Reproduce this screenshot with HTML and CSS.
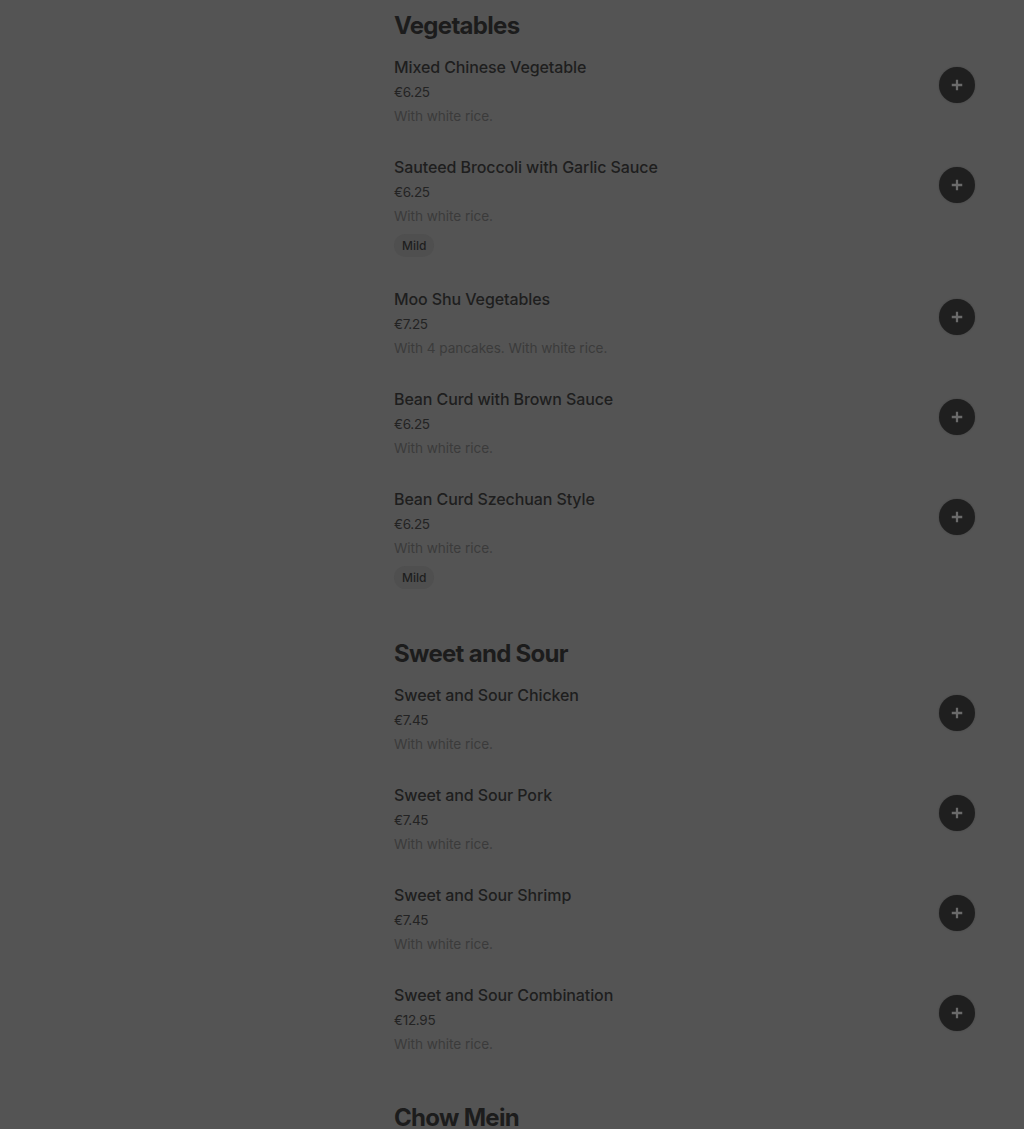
FILE: index.html
```html
<!DOCTYPE html>
<html lang="en">
<head>
<meta charset="utf-8">
<title>Menu</title>
<link rel="stylesheet" href="styles.css">
</head>
<body>
<div class="page">
  <aside class="side"></aside>
  <main class="menu">
    <section class="section">
      <h2 class="section-title">Vegetables</h2>
      <div class="item">
        <div class="info">
          <div class="name">Mixed Chinese Vegetable</div>
          <div class="price">€6.25</div>
          <div class="desc">With white rice.</div>
        </div>
        <button class="add" aria-label="Add"><svg viewBox="0 0 16 16" width="16" height="16"><path d="M8 2v12M2 8h12" stroke="currentColor" stroke-width="2.6" fill="none"/></svg></button>
      </div>
      <div class="item">
        <div class="info">
          <div class="name">Sauteed Broccoli with Garlic Sauce</div>
          <div class="price">€6.25</div>
          <div class="desc">With white rice.</div>
          <span class="tag">Mild</span>
        </div>
        <button class="add" aria-label="Add"><svg viewBox="0 0 16 16" width="16" height="16"><path d="M8 2v12M2 8h12" stroke="currentColor" stroke-width="2.6" fill="none"/></svg></button>
      </div>
      <div class="item">
        <div class="info">
          <div class="name">Moo Shu Vegetables</div>
          <div class="price">€7.25</div>
          <div class="desc">With 4 pancakes. With white rice.</div>
        </div>
        <button class="add" aria-label="Add"><svg viewBox="0 0 16 16" width="16" height="16"><path d="M8 2v12M2 8h12" stroke="currentColor" stroke-width="2.6" fill="none"/></svg></button>
      </div>
      <div class="item">
        <div class="info">
          <div class="name">Bean Curd with Brown Sauce</div>
          <div class="price">€6.25</div>
          <div class="desc">With white rice.</div>
        </div>
        <button class="add" aria-label="Add"><svg viewBox="0 0 16 16" width="16" height="16"><path d="M8 2v12M2 8h12" stroke="currentColor" stroke-width="2.6" fill="none"/></svg></button>
      </div>
      <div class="item">
        <div class="info">
          <div class="name">Bean Curd Szechuan Style</div>
          <div class="price">€6.25</div>
          <div class="desc">With white rice.</div>
          <span class="tag">Mild</span>
        </div>
        <button class="add" aria-label="Add"><svg viewBox="0 0 16 16" width="16" height="16"><path d="M8 2v12M2 8h12" stroke="currentColor" stroke-width="2.6" fill="none"/></svg></button>
      </div>
    </section>
    <section class="section">
      <h2 class="section-title">Sweet and Sour</h2>
      <div class="item">
        <div class="info">
          <div class="name">Sweet and Sour Chicken</div>
          <div class="price">€7.45</div>
          <div class="desc">With white rice.</div>
        </div>
        <button class="add" aria-label="Add"><svg viewBox="0 0 16 16" width="16" height="16"><path d="M8 2v12M2 8h12" stroke="currentColor" stroke-width="2.6" fill="none"/></svg></button>
      </div>
      <div class="item">
        <div class="info">
          <div class="name">Sweet and Sour Pork</div>
          <div class="price">€7.45</div>
          <div class="desc">With white rice.</div>
        </div>
        <button class="add" aria-label="Add"><svg viewBox="0 0 16 16" width="16" height="16"><path d="M8 2v12M2 8h12" stroke="currentColor" stroke-width="2.6" fill="none"/></svg></button>
      </div>
      <div class="item">
        <div class="info">
          <div class="name">Sweet and Sour Shrimp</div>
          <div class="price">€7.45</div>
          <div class="desc">With white rice.</div>
        </div>
        <button class="add" aria-label="Add"><svg viewBox="0 0 16 16" width="16" height="16"><path d="M8 2v12M2 8h12" stroke="currentColor" stroke-width="2.6" fill="none"/></svg></button>
      </div>
      <div class="item">
        <div class="info">
          <div class="name">Sweet and Sour Combination</div>
          <div class="price">€12.95</div>
          <div class="desc">With white rice.</div>
        </div>
        <button class="add" aria-label="Add"><svg viewBox="0 0 16 16" width="16" height="16"><path d="M8 2v12M2 8h12" stroke="currentColor" stroke-width="2.6" fill="none"/></svg></button>
      </div>
    </section>
    <section class="section">
      <h2 class="section-title">Chow Mein</h2>
    </section>
  </main>
</div>
</body>
</html>
```
FILE: styles.css
```css
html, body {
  margin: 0;
  padding: 0;
  background: #545454;
  height: 1129px;
  overflow: hidden;
}
body {
  font-family: Inter, "Noto Sans", "Liberation Sans", sans-serif;
  color: #1c1c1c;
}
.page {
  display: grid;
  grid-template-columns: 394px 581px;
  padding-top: 10px;
}
.menu {
  display: flex;
  flex-direction: column;
}
.section {
  display: flex;
  flex-direction: column;
  margin-bottom: 19px;
}
.section-title {
  margin: 0 0 13px;
  font-size: 24px;
  line-height: 32px;
  font-weight: 700;
  letter-spacing: -0.7px;
  color: #1c1c1c;
}
.item {
  display: flex;
  justify-content: space-between;
  align-items: flex-start;
  padding-bottom: 27px;
}
.info {
  display: flex;
  flex-direction: column;
  align-items: flex-start;
}
.name {
  font-size: 16px;
  line-height: 24px;
  font-weight: 500;
  color: #1e1e1e;
  letter-spacing: -0.1px;
}
.price {
  padding-top: 1px;
  font-size: 13.5px;
  line-height: 24px;
  color: #232323;
  letter-spacing: -0.3px;
}
.desc {
  font-size: 13.6px;
  line-height: 24px;
  color: #3b3b3b;
  letter-spacing: -0.05px;
}
.tag {
  margin-top: 6px;
  margin-bottom: 3px;
  height: 23px;
  line-height: 23px;
  padding: 0 8px;
  border-radius: 12px;
  background: #4f4f4f;
  font-size: 12px;
  font-weight: 500;
  color: #1e1e1e;
}
.add {
  margin-top: 12px;
  width: 36px;
  height: 36px;
  border-radius: 50%;
  border: none;
  padding: 0;
  background: #1f1f1f;
  color: #6a6a6a;
  display: flex;
  align-items: center;
  justify-content: center;
  box-shadow: 0 0 2px rgba(0,0,0,0.25);
}
.add svg {
  width: 14px;
  height: 14px;
}
```
